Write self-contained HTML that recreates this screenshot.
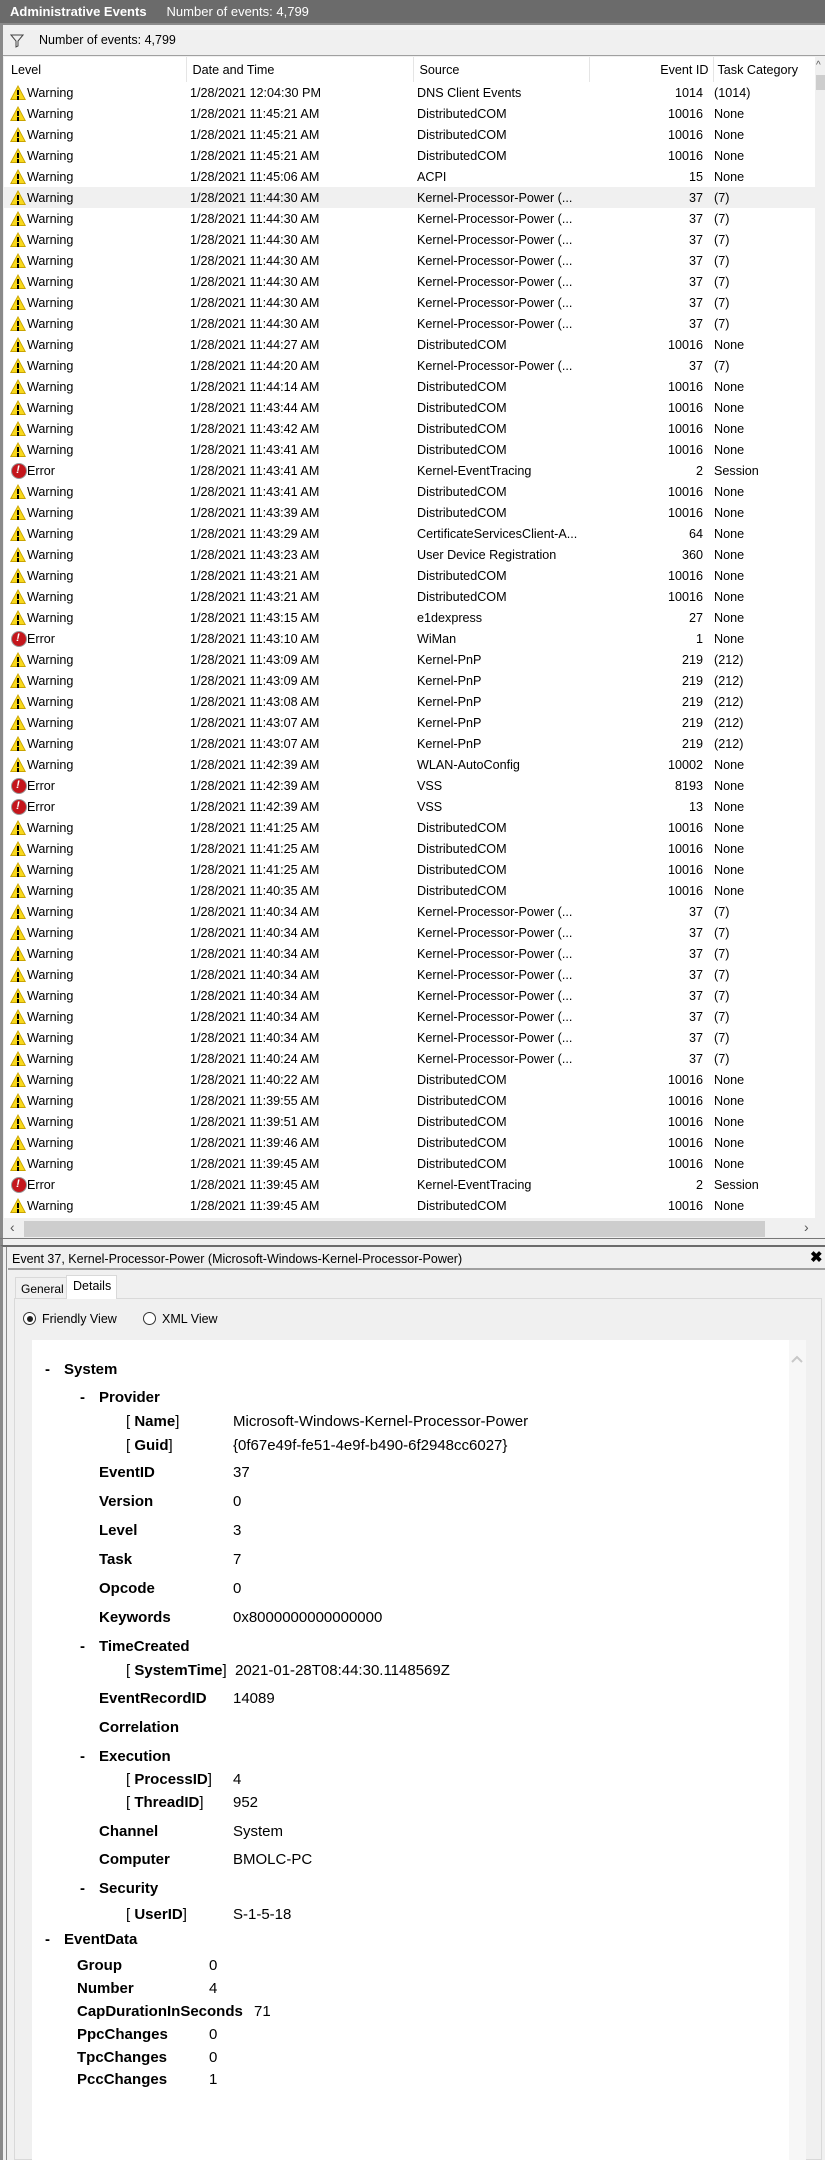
<!DOCTYPE html>
<html><head><meta charset="utf-8"><style>
*{margin:0;padding:0;box-sizing:border-box}
body{width:825px;height:2160px;background:#f0f0f0;font-family:"Liberation Sans",sans-serif;position:relative;overflow:hidden;color:#000}
.abs{position:absolute}
#title{left:0;top:0;width:825px;height:23px;background:#6b6b6b;color:#fff;font-size:13px;line-height:23px}
#outer{left:0;top:23px;width:825px;height:1225px;border-left:3px solid #8a8a8a;border-top:2px solid #8a8a8a;background:#f0f0f0}
#tb{left:3px;top:25px;width:822px;height:31px;background:#f0f0f0;border-bottom:1px solid #a0a0a0;font-size:12.5px;line-height:31px}
#list{left:4px;top:57px;width:811px;height:1161px;background:#fff;overflow:hidden}
table{border-collapse:collapse;font-size:12.6px;table-layout:fixed;width:811px}
td{height:21px;white-space:nowrap;overflow:hidden;padding:0}
th{height:25px;font-weight:normal;text-align:left;font-size:12.6px;border-right:1px solid #e5e5e5;padding-left:6px;white-space:nowrap}
.c1{width:182px;padding-left:6px}.c2{width:227px;padding-left:4px}.c3{width:176px;padding-left:4px}.c4{width:124px;text-align:right;padding-right:10px}.c5{padding-left:1px}
tr.sel td{background:#f0f0f0}
.w,.e{display:inline-block;width:16px;height:15px;vertical-align:-3px;margin-right:1px;position:relative}
.w{background:#c9a400;clip-path:polygon(50% 0,100% 100%,0 100%)}
.w::before{content:"";position:absolute;left:1.5px;right:1.5px;bottom:1px;top:2px;background:#f8d81c;clip-path:polygon(50% 0,100% 100%,0 100%)}
.w::after{content:"";position:absolute;left:7px;width:2px;top:5px;height:5px;background:#000;box-shadow:0 7px 0 -0px #000}
.w i{position:absolute;left:7px;top:11px;width:2px;height:2px;background:#000}
.e::before{content:"";position:absolute;left:1px;top:0;width:14px;height:14px;border-radius:50%;background:#c4161c;border:1px solid #999}
.e::after{content:"!";position:absolute;left:0;width:16px;text-align:center;top:1px;font-size:11px;font-weight:bold;line-height:13px;color:#fff}
.d{position:absolute;font-size:15px;line-height:18px;white-space:nowrap}
.b{font-weight:bold}
</style></head><body>
<div class="abs" id="title"><b style="margin-left:10px">Administrative Events</b><span style="margin-left:20px">Number of events: 4,799</span></div>
<div class="abs" id="outer"></div>
<div class="abs" id="tb"><svg class="abs" style="left:7px;top:9px" width="14" height="14" viewBox="0 0 14 14"><path d="M1 1h12L8 7v5l-2 1V7z" fill="none" stroke="#444"/></svg><span style="margin-left:36px">Number of events: 4,799</span></div>
<div class="abs" id="list">
<table>
<tr><th style="width:182px;padding-left:7px">Level</th><th style="width:227px">Date and Time</th><th style="width:176px">Source</th><th style="width:124px;text-align:right;padding-right:4px">Event ID</th><th style="border:none;padding-left:4px">Task Category</th></tr>
</table>
<table>
<tr><td class="c1"><i class="w"><i></i></i>Warning</td><td class="c2">1/28/2021 12:04:30 PM</td><td class="c3">DNS Client Events</td><td class="c4">1014</td><td class="c5">(1014)</td></tr>
<tr><td class="c1"><i class="w"><i></i></i>Warning</td><td class="c2">1/28/2021 11:45:21 AM</td><td class="c3">DistributedCOM</td><td class="c4">10016</td><td class="c5">None</td></tr>
<tr><td class="c1"><i class="w"><i></i></i>Warning</td><td class="c2">1/28/2021 11:45:21 AM</td><td class="c3">DistributedCOM</td><td class="c4">10016</td><td class="c5">None</td></tr>
<tr><td class="c1"><i class="w"><i></i></i>Warning</td><td class="c2">1/28/2021 11:45:21 AM</td><td class="c3">DistributedCOM</td><td class="c4">10016</td><td class="c5">None</td></tr>
<tr><td class="c1"><i class="w"><i></i></i>Warning</td><td class="c2">1/28/2021 11:45:06 AM</td><td class="c3">ACPI</td><td class="c4">15</td><td class="c5">None</td></tr>
<tr class="sel"><td class="c1"><i class="w"><i></i></i>Warning</td><td class="c2">1/28/2021 11:44:30 AM</td><td class="c3">Kernel-Processor-Power (...</td><td class="c4">37</td><td class="c5">(7)</td></tr>
<tr><td class="c1"><i class="w"><i></i></i>Warning</td><td class="c2">1/28/2021 11:44:30 AM</td><td class="c3">Kernel-Processor-Power (...</td><td class="c4">37</td><td class="c5">(7)</td></tr>
<tr><td class="c1"><i class="w"><i></i></i>Warning</td><td class="c2">1/28/2021 11:44:30 AM</td><td class="c3">Kernel-Processor-Power (...</td><td class="c4">37</td><td class="c5">(7)</td></tr>
<tr><td class="c1"><i class="w"><i></i></i>Warning</td><td class="c2">1/28/2021 11:44:30 AM</td><td class="c3">Kernel-Processor-Power (...</td><td class="c4">37</td><td class="c5">(7)</td></tr>
<tr><td class="c1"><i class="w"><i></i></i>Warning</td><td class="c2">1/28/2021 11:44:30 AM</td><td class="c3">Kernel-Processor-Power (...</td><td class="c4">37</td><td class="c5">(7)</td></tr>
<tr><td class="c1"><i class="w"><i></i></i>Warning</td><td class="c2">1/28/2021 11:44:30 AM</td><td class="c3">Kernel-Processor-Power (...</td><td class="c4">37</td><td class="c5">(7)</td></tr>
<tr><td class="c1"><i class="w"><i></i></i>Warning</td><td class="c2">1/28/2021 11:44:30 AM</td><td class="c3">Kernel-Processor-Power (...</td><td class="c4">37</td><td class="c5">(7)</td></tr>
<tr><td class="c1"><i class="w"><i></i></i>Warning</td><td class="c2">1/28/2021 11:44:27 AM</td><td class="c3">DistributedCOM</td><td class="c4">10016</td><td class="c5">None</td></tr>
<tr><td class="c1"><i class="w"><i></i></i>Warning</td><td class="c2">1/28/2021 11:44:20 AM</td><td class="c3">Kernel-Processor-Power (...</td><td class="c4">37</td><td class="c5">(7)</td></tr>
<tr><td class="c1"><i class="w"><i></i></i>Warning</td><td class="c2">1/28/2021 11:44:14 AM</td><td class="c3">DistributedCOM</td><td class="c4">10016</td><td class="c5">None</td></tr>
<tr><td class="c1"><i class="w"><i></i></i>Warning</td><td class="c2">1/28/2021 11:43:44 AM</td><td class="c3">DistributedCOM</td><td class="c4">10016</td><td class="c5">None</td></tr>
<tr><td class="c1"><i class="w"><i></i></i>Warning</td><td class="c2">1/28/2021 11:43:42 AM</td><td class="c3">DistributedCOM</td><td class="c4">10016</td><td class="c5">None</td></tr>
<tr><td class="c1"><i class="w"><i></i></i>Warning</td><td class="c2">1/28/2021 11:43:41 AM</td><td class="c3">DistributedCOM</td><td class="c4">10016</td><td class="c5">None</td></tr>
<tr><td class="c1"><i class="e"></i>Error</td><td class="c2">1/28/2021 11:43:41 AM</td><td class="c3">Kernel-EventTracing</td><td class="c4">2</td><td class="c5">Session</td></tr>
<tr><td class="c1"><i class="w"><i></i></i>Warning</td><td class="c2">1/28/2021 11:43:41 AM</td><td class="c3">DistributedCOM</td><td class="c4">10016</td><td class="c5">None</td></tr>
<tr><td class="c1"><i class="w"><i></i></i>Warning</td><td class="c2">1/28/2021 11:43:39 AM</td><td class="c3">DistributedCOM</td><td class="c4">10016</td><td class="c5">None</td></tr>
<tr><td class="c1"><i class="w"><i></i></i>Warning</td><td class="c2">1/28/2021 11:43:29 AM</td><td class="c3">CertificateServicesClient-A...</td><td class="c4">64</td><td class="c5">None</td></tr>
<tr><td class="c1"><i class="w"><i></i></i>Warning</td><td class="c2">1/28/2021 11:43:23 AM</td><td class="c3">User Device Registration</td><td class="c4">360</td><td class="c5">None</td></tr>
<tr><td class="c1"><i class="w"><i></i></i>Warning</td><td class="c2">1/28/2021 11:43:21 AM</td><td class="c3">DistributedCOM</td><td class="c4">10016</td><td class="c5">None</td></tr>
<tr><td class="c1"><i class="w"><i></i></i>Warning</td><td class="c2">1/28/2021 11:43:21 AM</td><td class="c3">DistributedCOM</td><td class="c4">10016</td><td class="c5">None</td></tr>
<tr><td class="c1"><i class="w"><i></i></i>Warning</td><td class="c2">1/28/2021 11:43:15 AM</td><td class="c3">e1dexpress</td><td class="c4">27</td><td class="c5">None</td></tr>
<tr><td class="c1"><i class="e"></i>Error</td><td class="c2">1/28/2021 11:43:10 AM</td><td class="c3">WiMan</td><td class="c4">1</td><td class="c5">None</td></tr>
<tr><td class="c1"><i class="w"><i></i></i>Warning</td><td class="c2">1/28/2021 11:43:09 AM</td><td class="c3">Kernel-PnP</td><td class="c4">219</td><td class="c5">(212)</td></tr>
<tr><td class="c1"><i class="w"><i></i></i>Warning</td><td class="c2">1/28/2021 11:43:09 AM</td><td class="c3">Kernel-PnP</td><td class="c4">219</td><td class="c5">(212)</td></tr>
<tr><td class="c1"><i class="w"><i></i></i>Warning</td><td class="c2">1/28/2021 11:43:08 AM</td><td class="c3">Kernel-PnP</td><td class="c4">219</td><td class="c5">(212)</td></tr>
<tr><td class="c1"><i class="w"><i></i></i>Warning</td><td class="c2">1/28/2021 11:43:07 AM</td><td class="c3">Kernel-PnP</td><td class="c4">219</td><td class="c5">(212)</td></tr>
<tr><td class="c1"><i class="w"><i></i></i>Warning</td><td class="c2">1/28/2021 11:43:07 AM</td><td class="c3">Kernel-PnP</td><td class="c4">219</td><td class="c5">(212)</td></tr>
<tr><td class="c1"><i class="w"><i></i></i>Warning</td><td class="c2">1/28/2021 11:42:39 AM</td><td class="c3">WLAN-AutoConfig</td><td class="c4">10002</td><td class="c5">None</td></tr>
<tr><td class="c1"><i class="e"></i>Error</td><td class="c2">1/28/2021 11:42:39 AM</td><td class="c3">VSS</td><td class="c4">8193</td><td class="c5">None</td></tr>
<tr><td class="c1"><i class="e"></i>Error</td><td class="c2">1/28/2021 11:42:39 AM</td><td class="c3">VSS</td><td class="c4">13</td><td class="c5">None</td></tr>
<tr><td class="c1"><i class="w"><i></i></i>Warning</td><td class="c2">1/28/2021 11:41:25 AM</td><td class="c3">DistributedCOM</td><td class="c4">10016</td><td class="c5">None</td></tr>
<tr><td class="c1"><i class="w"><i></i></i>Warning</td><td class="c2">1/28/2021 11:41:25 AM</td><td class="c3">DistributedCOM</td><td class="c4">10016</td><td class="c5">None</td></tr>
<tr><td class="c1"><i class="w"><i></i></i>Warning</td><td class="c2">1/28/2021 11:41:25 AM</td><td class="c3">DistributedCOM</td><td class="c4">10016</td><td class="c5">None</td></tr>
<tr><td class="c1"><i class="w"><i></i></i>Warning</td><td class="c2">1/28/2021 11:40:35 AM</td><td class="c3">DistributedCOM</td><td class="c4">10016</td><td class="c5">None</td></tr>
<tr><td class="c1"><i class="w"><i></i></i>Warning</td><td class="c2">1/28/2021 11:40:34 AM</td><td class="c3">Kernel-Processor-Power (...</td><td class="c4">37</td><td class="c5">(7)</td></tr>
<tr><td class="c1"><i class="w"><i></i></i>Warning</td><td class="c2">1/28/2021 11:40:34 AM</td><td class="c3">Kernel-Processor-Power (...</td><td class="c4">37</td><td class="c5">(7)</td></tr>
<tr><td class="c1"><i class="w"><i></i></i>Warning</td><td class="c2">1/28/2021 11:40:34 AM</td><td class="c3">Kernel-Processor-Power (...</td><td class="c4">37</td><td class="c5">(7)</td></tr>
<tr><td class="c1"><i class="w"><i></i></i>Warning</td><td class="c2">1/28/2021 11:40:34 AM</td><td class="c3">Kernel-Processor-Power (...</td><td class="c4">37</td><td class="c5">(7)</td></tr>
<tr><td class="c1"><i class="w"><i></i></i>Warning</td><td class="c2">1/28/2021 11:40:34 AM</td><td class="c3">Kernel-Processor-Power (...</td><td class="c4">37</td><td class="c5">(7)</td></tr>
<tr><td class="c1"><i class="w"><i></i></i>Warning</td><td class="c2">1/28/2021 11:40:34 AM</td><td class="c3">Kernel-Processor-Power (...</td><td class="c4">37</td><td class="c5">(7)</td></tr>
<tr><td class="c1"><i class="w"><i></i></i>Warning</td><td class="c2">1/28/2021 11:40:34 AM</td><td class="c3">Kernel-Processor-Power (...</td><td class="c4">37</td><td class="c5">(7)</td></tr>
<tr><td class="c1"><i class="w"><i></i></i>Warning</td><td class="c2">1/28/2021 11:40:24 AM</td><td class="c3">Kernel-Processor-Power (...</td><td class="c4">37</td><td class="c5">(7)</td></tr>
<tr><td class="c1"><i class="w"><i></i></i>Warning</td><td class="c2">1/28/2021 11:40:22 AM</td><td class="c3">DistributedCOM</td><td class="c4">10016</td><td class="c5">None</td></tr>
<tr><td class="c1"><i class="w"><i></i></i>Warning</td><td class="c2">1/28/2021 11:39:55 AM</td><td class="c3">DistributedCOM</td><td class="c4">10016</td><td class="c5">None</td></tr>
<tr><td class="c1"><i class="w"><i></i></i>Warning</td><td class="c2">1/28/2021 11:39:51 AM</td><td class="c3">DistributedCOM</td><td class="c4">10016</td><td class="c5">None</td></tr>
<tr><td class="c1"><i class="w"><i></i></i>Warning</td><td class="c2">1/28/2021 11:39:46 AM</td><td class="c3">DistributedCOM</td><td class="c4">10016</td><td class="c5">None</td></tr>
<tr><td class="c1"><i class="w"><i></i></i>Warning</td><td class="c2">1/28/2021 11:39:45 AM</td><td class="c3">DistributedCOM</td><td class="c4">10016</td><td class="c5">None</td></tr>
<tr><td class="c1"><i class="e"></i>Error</td><td class="c2">1/28/2021 11:39:45 AM</td><td class="c3">Kernel-EventTracing</td><td class="c4">2</td><td class="c5">Session</td></tr>
<tr><td class="c1"><i class="w"><i></i></i>Warning</td><td class="c2">1/28/2021 11:39:45 AM</td><td class="c3">DistributedCOM</td><td class="c4">10016</td><td class="c5">None</td></tr>
<tr><td class="c1"><i class="w"><i></i></i>Warning</td><td class="c2">1/28/2021 11:39:45 AM</td><td class="c3">DistributedCOM</td><td class="c4">10016</td><td class="c5">None</td></tr>
</table>
</div>
<div class="abs" style="left:815px;top:57px;width:10px;height:1161px;background:#f0f0f0"></div>
<div class="abs" style="left:816px;top:75px;width:9px;height:15px;background:#cdcdcd"></div>
<div class="abs" style="left:816px;top:60px;font-size:10px;color:#555">^</div>
<div class="abs" style="left:4px;top:1218px;width:821px;height:20px;background:#f0f0f0"></div>
<div class="abs" style="left:24px;top:1221px;width:741px;height:16px;background:#cdcdcd"></div>
<div class="abs" style="left:10px;top:1219px;font-size:14px;color:#555">&#8249;</div>
<div class="abs" style="left:804px;top:1219px;font-size:14px;color:#555">&#8250;</div>
<div class="abs" style="left:0;top:1238px;width:825px;height:1px;background:#777"></div>
<div class="abs" style="left:0;top:1245px;width:825px;height:915px;border-left:3px solid #8a8a8a;border-top:2px solid #6b6b6b;background:#f0f0f0"></div>
<div class="abs" style="left:6px;top:1247px;width:1px;height:913px;background:#8a8a8a"></div>
<div class="abs" style="left:12px;top:1249px;font-size:12.5px;line-height:20px">Event 37, Kernel-Processor-Power (Microsoft-Windows-Kernel-Processor-Power)</div>
<div class="abs" style="left:810px;top:1248px;font-size:15px;font-weight:bold">&#10006;</div>
<div class="abs" style="left:8px;top:1268px;width:817px;height:2px;background:#a0a0a0"></div>
<div class="abs" style="left:14px;top:1298px;width:808px;height:862px;border:1px solid #d9d9d9;background:#f0f0f0"></div>
<div class="abs" style="left:15px;top:1277px;width:52px;height:22px;border:1px solid #d9d9d9;border-bottom:none;font-size:12px;line-height:22px;padding-left:5px;white-space:nowrap;overflow:hidden">General</div>
<div class="abs" style="left:66px;top:1275px;width:51px;height:24px;border:1px solid #d9d9d9;border-bottom:none;background:#fff;font-size:12.5px;line-height:20px;padding-left:6px">Details</div>
<div class="abs" style="left:23px;top:1312px;width:13px;height:13px;border:1px solid #333;border-radius:50%;background:#fff"></div>
<div class="abs" style="left:26.5px;top:1315.5px;width:6px;height:6px;border-radius:50%;background:#222"></div>
<div class="abs" style="left:42px;top:1310px;font-size:12.5px;line-height:18px">Friendly View</div>
<div class="abs" style="left:143px;top:1312px;width:13px;height:13px;border:1px solid #333;border-radius:50%;background:#fff"></div>
<div class="abs" style="left:162px;top:1310px;font-size:12.5px;line-height:18px">XML View</div>
<div class="abs" style="left:32px;top:1340px;width:757px;height:820px;background:#fff"></div>
<div class="abs" style="left:789px;top:1340px;width:17px;height:820px;background:#f7f7f7"></div>
<svg class="abs" style="left:790px;top:1354px" width="14" height="10" viewBox="0 0 14 10"><path d="M2 8L7 3l5 5" fill="none" stroke="#c8c8c8" stroke-width="2"/></svg>

<div class="d b" style="left:45px;top:1361px">-</div><div class="d b" style="left:64px;top:1361px">System</div>
<div class="d b" style="left:80px;top:1389px">-</div><div class="d b" style="left:99px;top:1389px">Provider</div>
<div class="d" style="left:126px;top:1413px">[ <b>Name</b>]</div><div class="d" style="left:233px;top:1413px">Microsoft-Windows-Kernel-Processor-Power</div>
<div class="d" style="left:126px;top:1437px">[ <b>Guid</b>]</div><div class="d" style="left:233px;top:1437px">{0f67e49f-fe51-4e9f-b490-6f2948cc6027}</div>
<div class="d b" style="left:99px;top:1464px">EventID</div><div class="d" style="left:233px;top:1464px">37</div>
<div class="d b" style="left:99px;top:1493px">Version</div><div class="d" style="left:233px;top:1493px">0</div>
<div class="d b" style="left:99px;top:1522px">Level</div><div class="d" style="left:233px;top:1522px">3</div>
<div class="d b" style="left:99px;top:1551px">Task</div><div class="d" style="left:233px;top:1551px">7</div>
<div class="d b" style="left:99px;top:1580px">Opcode</div><div class="d" style="left:233px;top:1580px">0</div>
<div class="d b" style="left:99px;top:1609px">Keywords</div><div class="d" style="left:233px;top:1609px">0x8000000000000000</div>
<div class="d b" style="left:80px;top:1638px">-</div><div class="d b" style="left:99px;top:1638px">TimeCreated</div>
<div class="d" style="left:126px;top:1662px">[ <b>SystemTime</b>]</div><div class="d" style="left:235px;top:1662px">2021-01-28T08:44:30.1148569Z</div>
<div class="d b" style="left:99px;top:1690px">EventRecordID</div><div class="d" style="left:233px;top:1690px">14089</div>
<div class="d b" style="left:99px;top:1719px">Correlation</div>
<div class="d b" style="left:80px;top:1748px">-</div><div class="d b" style="left:99px;top:1748px">Execution</div>
<div class="d" style="left:126px;top:1771px">[ <b>ProcessID</b>]</div><div class="d" style="left:233px;top:1771px">4</div>
<div class="d" style="left:126px;top:1794px">[ <b>ThreadID</b>]</div><div class="d" style="left:233px;top:1794px">952</div>
<div class="d b" style="left:99px;top:1823px">Channel</div><div class="d" style="left:233px;top:1823px">System</div>
<div class="d b" style="left:99px;top:1851px">Computer</div><div class="d" style="left:233px;top:1851px">BMOLC-PC</div>
<div class="d b" style="left:80px;top:1880px">-</div><div class="d b" style="left:99px;top:1880px">Security</div>
<div class="d" style="left:126px;top:1906px">[ <b>UserID</b>]</div><div class="d" style="left:233px;top:1906px">S-1-5-18</div>
<div class="d b" style="left:45px;top:1931px">-</div><div class="d b" style="left:64px;top:1931px">EventData</div>
<div class="d b" style="left:77px;top:1957px">Group</div><div class="d" style="left:209px;top:1957px">0</div>
<div class="d b" style="left:77px;top:1980px">Number</div><div class="d" style="left:209px;top:1980px">4</div>
<div class="d b" style="left:77px;top:2003px">CapDurationInSeconds</div><div class="d" style="left:254px;top:2003px">71</div>
<div class="d b" style="left:77px;top:2026px">PpcChanges</div><div class="d" style="left:209px;top:2026px">0</div>
<div class="d b" style="left:77px;top:2049px">TpcChanges</div><div class="d" style="left:209px;top:2049px">0</div>
<div class="d b" style="left:77px;top:2071px">PccChanges</div><div class="d" style="left:209px;top:2071px">1</div>
</body></html>
